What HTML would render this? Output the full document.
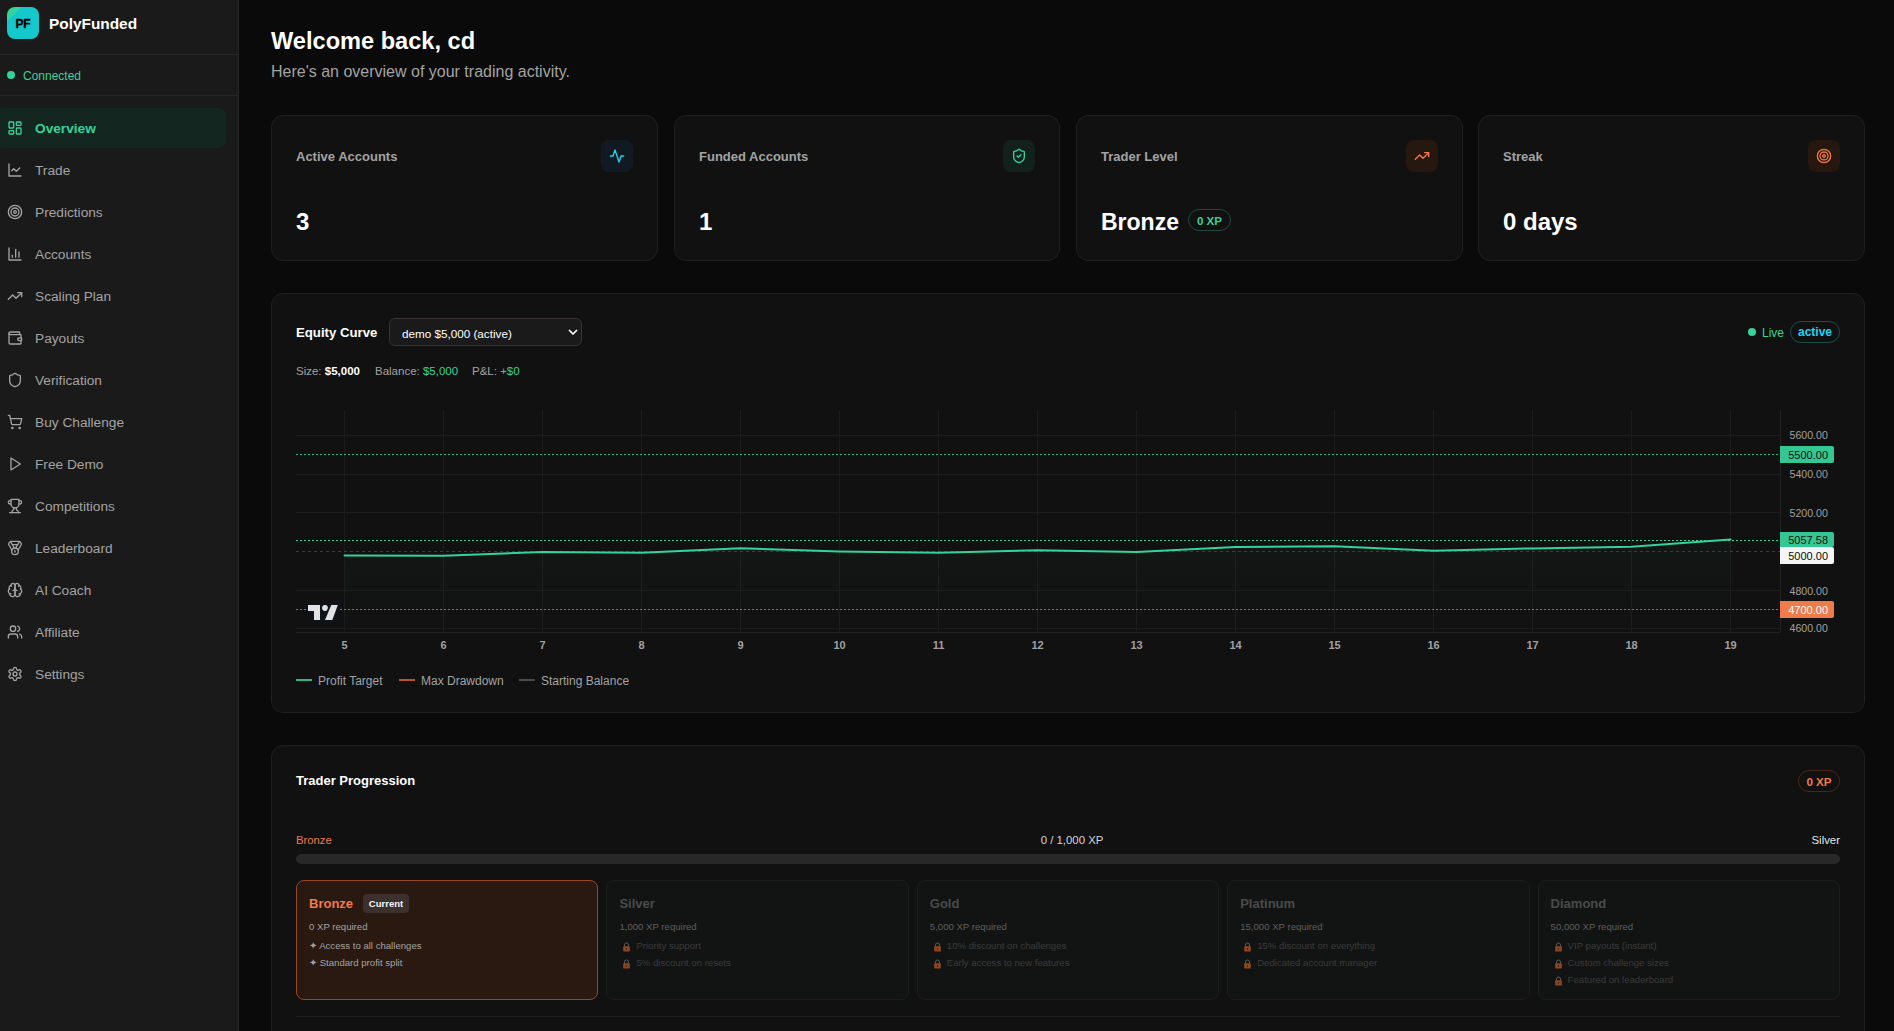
<!DOCTYPE html>
<html><head><meta charset="utf-8">
<style>
*{box-sizing:border-box;margin:0;padding:0}
html,body{width:1894px;height:1031px;overflow:hidden;background:#0a0a0a;font-family:"Liberation Sans",sans-serif;color:#fff}
.a{position:absolute}
#sb{left:0;top:0;width:239px;height:1031px;background:#1a1a1a;border-right:1px solid #262626}
.hr{position:absolute;left:0;width:238px;height:1px;background:#262626}
.nav{position:absolute;left:0;width:238px;height:40px}
.nav svg{position:absolute;left:7px;top:12px;width:16px;height:16px;fill:none;stroke:#a3a3a3;stroke-width:2;stroke-linecap:round;stroke-linejoin:round}
.nav span{position:absolute;left:35px;top:1px;line-height:40px;font-size:13.7px;color:#a3a3a3;white-space:nowrap}
.nav.act svg{stroke:#34d399}.nav.act span{color:#34d399;font-weight:bold}
.card{position:absolute;background:#111111;border:1px solid #1f1f1f;border-radius:12px}
.slab{font-size:13px;font-weight:bold;color:#a3a3a3;line-height:18px;white-space:nowrap}
.sbox{width:32px;height:32px;border-radius:8px}
.sbox svg{position:absolute;left:8px;top:8px;width:16px;height:16px;fill:none;stroke-width:2;stroke-linecap:round;stroke-linejoin:round}
.sval{font-size:24px;font-weight:bold;line-height:32px;color:#fff;white-space:nowrap}
.eq{font-size:11.5px;line-height:14px;color:#a3a3a3;white-space:nowrap}
.pl{font-size:10.6px;line-height:14px;color:#a0a0a0;white-space:nowrap}
.pb{left:1780px;width:54px;font-size:11px;text-align:right;padding-right:6px;padding-top:1px;border-radius:0 2px 2px 0;white-space:nowrap}
.tl{top:638px;width:30px;text-align:center;font-size:11px;line-height:14px;font-weight:bold;color:#a0a0a0}
.lg{top:674px;font-size:12px;line-height:15px;color:#a3a3a3;white-space:nowrap}
.tq{font-size:9.6px;line-height:14px;white-space:nowrap}
.lk{position:absolute;left:0;top:0;width:9px;height:10px}
</style></head><body>
<!-- SIDEBAR -->
<div id="sb" class="a">
  <div class="a" style="left:7px;top:7px;width:32px;height:32px;border-radius:8px;background:linear-gradient(135deg,#34d399 0,#34d399 22%,#14c8cc 22%,#14c8cc 100%);"></div>
  <div class="a" style="left:7px;top:8px;width:32px;height:32px;line-height:32px;text-align:center;font-weight:bold;font-size:12px;letter-spacing:-0.2px;-webkit-text-stroke:0.35px #000;color:#000">PF</div>
  <div class="a" style="left:49px;top:14px;font-size:15.4px;font-weight:bold;line-height:20px;color:#fff">PolyFunded</div>
  <div class="hr" style="top:54px"></div>
  <div class="a" style="left:7px;top:71.4px;width:8px;height:8px;border-radius:50%;background:#34d399"></div>
  <div class="a" style="left:23px;top:69px;font-size:12px;line-height:14px;color:#34d399">Connected</div>
  <div class="hr" style="top:95px"></div>
  <div class="a" style="left:-4px;top:108px;width:230px;height:40px;border-radius:8px;background:#142620"></div>
  <div class="nav act" style="top:108px"><svg viewBox="0 0 24 24"><rect x="3" y="3" width="7" height="9" rx="1"/><rect x="14" y="3" width="7" height="5" rx="1"/><rect x="14" y="12" width="7" height="9" rx="1"/><rect x="3" y="16" width="7" height="5" rx="1"/></svg><span>Overview</span></div>
  <div class="nav" style="top:150px"><svg viewBox="0 0 24 24"><path d="M3 3v18h18"/><path d="m19 9-5 5-4-4-3 3"/></svg><span>Trade</span></div>
  <div class="nav" style="top:192px"><svg viewBox="0 0 24 24"><circle cx="12" cy="12" r="10"/><circle cx="12" cy="12" r="6"/><circle cx="12" cy="12" r="2"/></svg><span>Predictions</span></div>
  <div class="nav" style="top:234px"><svg viewBox="0 0 24 24"><path d="M3 3v18h18"/><path d="M18 17V9"/><path d="M13 17V5"/><path d="M8 17v-3"/></svg><span>Accounts</span></div>
  <div class="nav" style="top:276px"><svg viewBox="0 0 24 24"><polyline points="22 7 13.5 15.5 8.5 10.5 2 17"/><polyline points="16 7 22 7 22 13"/></svg><span>Scaling Plan</span></div>
  <div class="nav" style="top:318px"><svg viewBox="0 0 24 24"><path d="M19 7V4a1 1 0 0 0-1-1H5a2 2 0 0 0 0 4h15a1 1 0 0 1 1 1v4h-3a2 2 0 0 0 0 4h3a1 1 0 0 0 1-1v-2a1 1 0 0 0-1-1"/><path d="M3 5v14a2 2 0 0 0 2 2h15a1 1 0 0 0 1-1v-4"/></svg><span>Payouts</span></div>
  <div class="nav" style="top:360px"><svg viewBox="0 0 24 24"><path d="M20 13c0 5-3.5 7.5-7.66 8.95a1 1 0 0 1-.67-.01C7.5 20.5 4 18 4 13V6a1 1 0 0 1 1-1c2 0 4.5-1.2 6.24-2.72a1.17 1.17 0 0 1 1.52 0C14.51 3.81 17 5 19 5a1 1 0 0 1 1 1z"/></svg><span>Verification</span></div>
  <div class="nav" style="top:402px"><svg viewBox="0 0 24 24"><circle cx="8" cy="21" r="1"/><circle cx="19" cy="21" r="1"/><path d="M2.05 2.05h2l2.66 12.42a2 2 0 0 0 2 1.58h9.78a2 2 0 0 0 1.95-1.57l1.65-7.43H5.12"/></svg><span>Buy Challenge</span></div>
  <div class="nav" style="top:444px"><svg viewBox="0 0 24 24"><polygon points="6 3 20 12 6 21 6 3"/></svg><span>Free Demo</span></div>
  <div class="nav" style="top:486px"><svg viewBox="0 0 24 24"><path d="M6 9H4.5a2.5 2.5 0 0 1 0-5H6"/><path d="M18 9h1.5a2.5 2.5 0 0 0 0-5H18"/><path d="M4 22h16"/><path d="M10 14.66V17c0 .55-.47.98-.97 1.21C7.85 18.75 7 20.24 7 22"/><path d="M14 14.66V17c0 .55.47.98.97 1.21C16.15 18.75 17 20.24 17 22"/><path d="M18 2H6v7a6 6 0 0 0 12 0V2Z"/></svg><span>Competitions</span></div>
  <div class="nav" style="top:528px"><svg viewBox="0 0 24 24"><path d="M7.21 15 2.66 7.14a2 2 0 0 1 .13-2.2L4.4 2.8A2 2 0 0 1 6 2h12a2 2 0 0 1 1.6.8l1.6 2.14a2 2 0 0 1 .14 2.2L16.79 15"/><path d="M11 12 5.12 2.2"/><path d="m13 12 5.88-9.8"/><path d="M8 7h8"/><circle cx="12" cy="17" r="5"/><path d="M12 18v-2h-.5"/></svg><span>Leaderboard</span></div>
  <div class="nav" style="top:570px"><svg viewBox="0 0 24 24"><path d="M12 5a3 3 0 1 0-5.997.125 4 4 0 0 0-2.526 5.77 4 4 0 0 0 .556 6.588A4 4 0 1 0 12 18Z"/><path d="M12 5a3 3 0 1 1 5.997.125 4 4 0 0 1 2.526 5.77 4 4 0 0 1-.556 6.588A4 4 0 1 1 12 18Z"/><path d="M15 13a4.5 4.5 0 0 1-3-4 4.5 4.5 0 0 1-3 4"/><path d="M17.599 6.5a3 3 0 0 0 .399-1.375"/><path d="M6.003 5.125A3 3 0 0 0 6.401 6.5"/><path d="M3.477 10.896a4 4 0 0 1 .585-.396"/><path d="M19.938 10.5a4 4 0 0 1 .585.396"/><path d="M6 18a4 4 0 0 1-1.967-.516"/><path d="M19.967 17.484A4 4 0 0 1 18 18"/></svg><span>AI Coach</span></div>
  <div class="nav" style="top:612px"><svg viewBox="0 0 24 24"><path d="M16 21v-2a4 4 0 0 0-4-4H6a4 4 0 0 0-4 4v2"/><circle cx="9" cy="7" r="4"/><path d="M22 21v-2a4 4 0 0 0-3-3.87"/><path d="M16 3.13a4 4 0 0 1 0 7.75"/></svg><span>Affiliate</span></div>
  <div class="nav" style="top:654px"><svg viewBox="0 0 24 24"><path d="M12.22 2h-.44a2 2 0 0 0-2 2v.18a2 2 0 0 1-1 1.73l-.43.25a2 2 0 0 1-2 0l-.15-.08a2 2 0 0 0-2.73.73l-.22.38a2 2 0 0 0 .73 2.73l.15.1a2 2 0 0 1 1 1.72v.51a2 2 0 0 1-1 1.74l-.15.09a2 2 0 0 0-.73 2.73l.22.38a2 2 0 0 0 2.73.73l.15-.08a2 2 0 0 1 2 0l.43.25a2 2 0 0 1 1 1.73V20a2 2 0 0 0 2 2h.44a2 2 0 0 0 2-2v-.18a2 2 0 0 1 1-1.73l.43-.25a2 2 0 0 1 2 0l.15.08a2 2 0 0 0 2.73-.73l.22-.39a2 2 0 0 0-.73-2.73l-.15-.08a2 2 0 0 1-1-1.74v-.5a2 2 0 0 1 1-1.74l.15-.09a2 2 0 0 0 .73-2.73l-.22-.38a2 2 0 0 0-2.73-.73l-.15.08a2 2 0 0 1-2 0l-.43-.25a2 2 0 0 1-1-1.73V4a2 2 0 0 0-2-2z"/><circle cx="12" cy="12" r="3"/></svg><span>Settings</span></div>
</div>
<!-- MAIN -->
<div class="a" style="left:271px;top:27px;font-size:23.6px;font-weight:bold;line-height:28px;white-space:nowrap">Welcome back, cd</div>
<div class="a" style="left:271px;top:63px;font-size:16px;line-height:18px;color:#a3a3a3;white-space:nowrap">Here's an overview of your trading activity.</div>

<div class="card" style="left:271px;top:115px;width:387px;height:146px"></div>
<div class="card" style="left:674px;top:115px;width:386px;height:146px"></div>
<div class="card" style="left:1076px;top:115px;width:387px;height:146px"></div>
<div class="card" style="left:1478px;top:115px;width:387px;height:146px"></div>

<div class="a slab" style="left:296px;top:148px">Active Accounts</div>
<div class="a sbox" style="left:601px;top:140px;background:#111a22"><svg viewBox="0 0 24 24" style="stroke:#22d3ee"><path d="M22 12h-4l-3 9L9 3l-3 9H2"/></svg></div>
<div class="a sval" style="left:296px;top:206px">3</div>
<div class="a slab" style="left:699px;top:148px">Funded Accounts</div>
<div class="a sbox" style="left:1003px;top:140px;background:#12211b"><svg viewBox="0 0 24 24" style="stroke:#34d399"><path d="M20 13c0 5-3.5 7.5-7.66 8.95a1 1 0 0 1-.67-.01C7.5 20.5 4 18 4 13V6a1 1 0 0 1 1-1c2 0 4.5-1.2 6.24-2.72a1.17 1.17 0 0 1 1.52 0C14.51 3.81 17 5 19 5a1 1 0 0 1 1 1z"/><path d="m9 12 2 2 4-4"/></svg></div>
<div class="a sval" style="left:699px;top:206px">1</div>
<div class="a slab" style="left:1101px;top:148px">Trader Level</div>
<div class="a sbox" style="left:1406px;top:140px;background:#26170f"><svg viewBox="0 0 24 24" style="stroke:#f47a4a"><polyline points="22 7 13.5 15.5 8.5 10.5 2 17"/><polyline points="16 7 22 7 22 13"/></svg></div>
<div class="a sval" style="left:1101px;top:206px;font-size:23px">Bronze</div>
<div class="a slab" style="left:1503px;top:148px">Streak</div>
<div class="a sbox" style="left:1808px;top:140px;background:#26170f"><svg viewBox="0 0 24 24" style="stroke:#f47a4a"><circle cx="12" cy="12" r="10"/><circle cx="12" cy="12" r="6"/><circle cx="12" cy="12" r="2"/></svg></div>
<div class="a sval" style="left:1503px;top:206px">0 days</div>
<div class="a" style="left:1188px;top:209px;width:43px;height:22px;border:1px solid #1d4a3a;border-radius:11px;font-size:11.6px;line-height:21px;text-align:center;color:#34d399;font-weight:bold">0 XP</div>

<div class="card" style="left:271px;top:293px;width:1594px;height:420px"></div>
<div class="a" style="left:296px;top:323.5px;font-size:13.2px;font-weight:bold;line-height:18px;white-space:nowrap">Equity Curve</div>
<div class="a" style="left:389px;top:318px;width:193px;height:28px;border:1px solid #3a3331;border-radius:6px;background:#1a1a1a"></div>
<div class="a" style="left:402px;top:325.5px;font-size:11.7px;line-height:15px;color:#fff;white-space:nowrap">demo $5,000 (active)</div>
<svg class="a" style="left:567px;top:326px" width="12" height="12" viewBox="0 0 24 24" fill="none" stroke="#fff" stroke-width="3.5" stroke-linecap="round" stroke-linejoin="round"><path d="m5 9 7 7 7-7"/></svg>
<div class="a eq" style="left:296px;top:364px">Size: <b style="color:#fff">$5,000</b></div>
<div class="a eq" style="left:375px;top:364px">Balance: <span style="color:#34d399">$5,000</span></div>
<div class="a eq" style="left:472px;top:364px">P&amp;L: <span style="color:#34d399">+$0</span></div>
<div class="a" style="left:1748px;top:328px;width:8px;height:8px;border-radius:50%;background:#34d399"></div>
<div class="a" style="left:1762px;top:326px;font-size:12px;line-height:15px;color:#34d399">Live</div>
<div class="a" style="left:1790px;top:321px;width:50px;height:22px;border:1px solid #1b4d4a;border-radius:11px;font-size:12px;line-height:21px;text-align:center;color:#22d3ee;font-weight:bold">active</div>
<svg class="a" style="left:0;top:0" width="1894" height="1031" viewBox="0 0 1894 1031">
<defs><linearGradient id="ag" x1="0" y1="0" x2="0" y2="1"><stop offset="0" stop-color="#34d399" stop-opacity="0.03"/><stop offset="1" stop-color="#34d399" stop-opacity="0.0"/></linearGradient></defs>
<g stroke="#1c1c1c" stroke-width="1"><line x1="344.5" y1="410" x2="344.5" y2="632"/><line x1="443.5" y1="410" x2="443.5" y2="632"/><line x1="542.5" y1="410" x2="542.5" y2="632"/><line x1="641.5" y1="410" x2="641.5" y2="632"/><line x1="740.5" y1="410" x2="740.5" y2="632"/><line x1="839.5" y1="410" x2="839.5" y2="632"/><line x1="938.5" y1="410" x2="938.5" y2="632"/><line x1="1037.5" y1="410" x2="1037.5" y2="632"/><line x1="1136.5" y1="410" x2="1136.5" y2="632"/><line x1="1235.5" y1="410" x2="1235.5" y2="632"/><line x1="1334.5" y1="410" x2="1334.5" y2="632"/><line x1="1433.5" y1="410" x2="1433.5" y2="632"/><line x1="1532.5" y1="410" x2="1532.5" y2="632"/><line x1="1631.5" y1="410" x2="1631.5" y2="632"/><line x1="1730.5" y1="410" x2="1730.5" y2="632"/><line x1="296" y1="435.5" x2="1780" y2="435.5"/><line x1="296" y1="474.5" x2="1780" y2="474.5"/><line x1="296" y1="512.5" x2="1780" y2="512.5"/><line x1="296" y1="590.5" x2="1780" y2="590.5"/><line x1="296" y1="628.5" x2="1780" y2="628.5"/></g>
<line x1="296" y1="632.5" x2="1780" y2="632.5" stroke="#222" stroke-width="1"/>
<line x1="1780.5" y1="410" x2="1780.5" y2="632" stroke="#222" stroke-width="1"/>
<path d="M344.5 555.4 L443.5 555.8 L542.5 551.9 L641.5 552.7 L740.5 548.3 L839.5 551.5 L938.5 552.7 L1037.5 550.3 L1136.5 551.9 L1235.5 546.9 L1334.5 546.2 L1433.5 550.8 L1532.5 548.4 L1631.5 546.7 L1730.5 539.6 L1730.5 632 L344.5 632 Z" fill="url(#ag)"/>
<line x1="296" y1="454.5" x2="1780" y2="454.5" stroke="#2fb88a" stroke-width="1" stroke-dasharray="2 2"/>
<line x1="296" y1="540.5" x2="1780" y2="540.5" stroke="#34d399" stroke-width="1" stroke-dasharray="2 2"/>
<line x1="296" y1="551.5" x2="1780" y2="551.5" stroke="#3e3b39" stroke-width="1" stroke-dasharray="3 3"/>
<line x1="296" y1="609.5" x2="1780" y2="609.5" stroke="#c8602f" stroke-width="1" stroke-dasharray="2 2"/>
<path d="M344.5 555.4 L443.5 555.8 L542.5 551.9 L641.5 552.7 L740.5 548.3 L839.5 551.5 L938.5 552.7 L1037.5 550.3 L1136.5 551.9 L1235.5 546.9 L1334.5 546.2 L1433.5 550.8 L1532.5 548.4 L1631.5 546.7 L1730.5 539.6" fill="none" stroke="#34d399" stroke-width="2" stroke-linejoin="round" stroke-linecap="round"/>
</svg>
<div class="a pl" style="left:1789.5px;top:427.9px">5600.00</div>
<div class="a pl" style="left:1789.5px;top:466.8px">5400.00</div>
<div class="a pl" style="left:1789.5px;top:505.7px">5200.00</div>
<div class="a pl" style="left:1789.5px;top:583.5px">4800.00</div>
<div class="a pl" style="left:1789.5px;top:621.0px">4600.00</div>
<div class="a pb" style="top:446px;height:17px;line-height:17px;background:#34c794;color:#0d0d0d">5500.00</div>
<div class="a pb" style="top:532px;height:15px;line-height:15px;background:#34c794;color:#0d0d0d">5057.58</div>
<div class="a pb" style="top:547px;height:17px;line-height:17px;background:#f5f5f5;color:#0d0d0d">5000.00</div>
<div class="a pb" style="top:601px;height:17px;line-height:17px;background:#f07b4a;color:#fff">4700.00</div>
<div class="a tl" style="left:329.5px">5</div>
<div class="a tl" style="left:428.5px">6</div>
<div class="a tl" style="left:527.5px">7</div>
<div class="a tl" style="left:626.5px">8</div>
<div class="a tl" style="left:725.5px">9</div>
<div class="a tl" style="left:824.5px">10</div>
<div class="a tl" style="left:923.5px">11</div>
<div class="a tl" style="left:1022.5px">12</div>
<div class="a tl" style="left:1121.5px">13</div>
<div class="a tl" style="left:1220.5px">14</div>
<div class="a tl" style="left:1319.5px">15</div>
<div class="a tl" style="left:1418.5px">16</div>
<div class="a tl" style="left:1517.5px">17</div>
<div class="a tl" style="left:1616.5px">18</div>
<div class="a tl" style="left:1715.5px">19</div>
<svg class="a" style="left:300px;top:595px" width="50" height="30" viewBox="0 0 50 30"><g fill="#e2e2e2" stroke="#0c1522" stroke-width="3.6" stroke-linejoin="miter" style="paint-order:stroke"><path d="M8 10H20V25H14V16H8Z"/><circle cx="25" cy="13" r="2.9"/><path d="M31.3 10H37.8L32.3 25H25Z"/></g></svg>
<div class="a" style="left:296px;top:679px;width:16px;height:2px;background:#2fb58a"></div><div class="a lg" style="left:318px">Profit Target</div>
<div class="a" style="left:399px;top:679px;width:16px;height:2px;background:#b8552a"></div><div class="a lg" style="left:421px">Max Drawdown</div>
<div class="a" style="left:519px;top:679px;width:16px;height:2px;background:#4a4a4a"></div><div class="a lg" style="left:541px">Starting Balance</div>

<div class="card" style="left:271px;top:745px;width:1594px;height:320px"></div>
<div class="a" style="left:296px;top:772px;font-size:13px;font-weight:bold;line-height:17px;white-space:nowrap">Trader Progression</div>
<div class="a" style="left:1798px;top:770px;width:42px;height:22px;border:1px solid #4a2616;border-radius:11px;font-size:11.6px;line-height:21px;text-align:center;color:#f07a4a;font-weight:bold">0 XP</div>
<div class="a" style="left:296px;top:833px;font-size:11.3px;line-height:15px;color:#f07a4a;white-space:nowrap">Bronze</div>
<div class="a" style="left:1000px;top:833px;width:144px;text-align:center;font-size:11.4px;line-height:15px;color:#d4d4d4;white-space:nowrap">0 / 1,000 XP</div>
<div class="a" style="left:1700px;top:833px;width:140px;text-align:right;font-size:11.4px;line-height:15px;color:#e5e5e5;white-space:nowrap">Silver</div>
<div class="a" style="left:296px;top:854px;width:1544px;height:10px;border-radius:5px;background:#282828"></div>
<div class="a" style="left:296.0px;top:880px;width:302.4px;height:120px;border:1px solid #984822;border-radius:8px;background:#2a1910"></div>
<div class="a" style="left:309.0px;top:894.5px;font-size:13px;font-weight:bold;line-height:18px;color:#f07a4a">Bronze</div>
<div class="a" style="left:363.0px;top:894px;width:46px;height:19px;border-radius:4px;background:#3b302d;font-size:9.5px;font-weight:bold;line-height:19px;text-align:center;color:#f5f5f5">Current</div>
<div class="a tq" style="left:309.0px;top:920px;color:#a3a3a3">0 XP required</div>
<div class="a tq" style="left:309.0px;top:939px;color:#a3a3a3">&#10022; Access to all challenges</div>
<div class="a tq" style="left:309.0px;top:956px;color:#a3a3a3">&#10022; Standard profit split</div>
<div class="a" style="left:606.4px;top:880px;width:302.4px;height:120px;border:1px solid #1c1e1e;border-radius:8px;background:#121414"></div>
<div class="a" style="left:619.4px;top:894.5px;font-size:13px;font-weight:bold;line-height:18px;color:#4b4b4b">Silver</div>
<div class="a tq" style="left:619.4px;top:920px;color:#5e5e5e">1,000 XP required</div>
<div class="a" style="left:622.4px;top:941.5px;width:9px;height:10px"><svg class="lk" viewBox="0 0 10 12"><path d="M2.6 5.5V3.6a2.4 2.4 0 0 1 4.8 0v1.9" fill="none" stroke="#5a5a5a" stroke-width="1.2"/><rect x="1" y="5" width="8" height="6.5" rx="1" fill="#8f4521"/><rect x="4.5" y="7.2" width="1" height="2.4" fill="#3a2015"/></svg></div>
<div class="a tq" style="left:636.4px;top:939px;color:#3b3b3b">Priority support</div>
<div class="a" style="left:622.4px;top:958.5px;width:9px;height:10px"><svg class="lk" viewBox="0 0 10 12"><path d="M2.6 5.5V3.6a2.4 2.4 0 0 1 4.8 0v1.9" fill="none" stroke="#5a5a5a" stroke-width="1.2"/><rect x="1" y="5" width="8" height="6.5" rx="1" fill="#8f4521"/><rect x="4.5" y="7.2" width="1" height="2.4" fill="#3a2015"/></svg></div>
<div class="a tq" style="left:636.4px;top:956px;color:#3b3b3b">5% discount on resets</div>
<div class="a" style="left:916.8px;top:880px;width:302.4px;height:120px;border:1px solid #1c1e1e;border-radius:8px;background:#121414"></div>
<div class="a" style="left:929.8px;top:894.5px;font-size:13px;font-weight:bold;line-height:18px;color:#4b4b4b">Gold</div>
<div class="a tq" style="left:929.8px;top:920px;color:#5e5e5e">5,000 XP required</div>
<div class="a" style="left:932.8px;top:941.5px;width:9px;height:10px"><svg class="lk" viewBox="0 0 10 12"><path d="M2.6 5.5V3.6a2.4 2.4 0 0 1 4.8 0v1.9" fill="none" stroke="#5a5a5a" stroke-width="1.2"/><rect x="1" y="5" width="8" height="6.5" rx="1" fill="#8f4521"/><rect x="4.5" y="7.2" width="1" height="2.4" fill="#3a2015"/></svg></div>
<div class="a tq" style="left:946.8px;top:939px;color:#3b3b3b">10% discount on challenges</div>
<div class="a" style="left:932.8px;top:958.5px;width:9px;height:10px"><svg class="lk" viewBox="0 0 10 12"><path d="M2.6 5.5V3.6a2.4 2.4 0 0 1 4.8 0v1.9" fill="none" stroke="#5a5a5a" stroke-width="1.2"/><rect x="1" y="5" width="8" height="6.5" rx="1" fill="#8f4521"/><rect x="4.5" y="7.2" width="1" height="2.4" fill="#3a2015"/></svg></div>
<div class="a tq" style="left:946.8px;top:956px;color:#3b3b3b">Early access to new features</div>
<div class="a" style="left:1227.2px;top:880px;width:302.4px;height:120px;border:1px solid #1c1e1e;border-radius:8px;background:#121414"></div>
<div class="a" style="left:1240.2px;top:894.5px;font-size:13px;font-weight:bold;line-height:18px;color:#4b4b4b">Platinum</div>
<div class="a tq" style="left:1240.2px;top:920px;color:#5e5e5e">15,000 XP required</div>
<div class="a" style="left:1243.2px;top:941.5px;width:9px;height:10px"><svg class="lk" viewBox="0 0 10 12"><path d="M2.6 5.5V3.6a2.4 2.4 0 0 1 4.8 0v1.9" fill="none" stroke="#5a5a5a" stroke-width="1.2"/><rect x="1" y="5" width="8" height="6.5" rx="1" fill="#8f4521"/><rect x="4.5" y="7.2" width="1" height="2.4" fill="#3a2015"/></svg></div>
<div class="a tq" style="left:1257.2px;top:939px;color:#3b3b3b">15% discount on everything</div>
<div class="a" style="left:1243.2px;top:958.5px;width:9px;height:10px"><svg class="lk" viewBox="0 0 10 12"><path d="M2.6 5.5V3.6a2.4 2.4 0 0 1 4.8 0v1.9" fill="none" stroke="#5a5a5a" stroke-width="1.2"/><rect x="1" y="5" width="8" height="6.5" rx="1" fill="#8f4521"/><rect x="4.5" y="7.2" width="1" height="2.4" fill="#3a2015"/></svg></div>
<div class="a tq" style="left:1257.2px;top:956px;color:#3b3b3b">Dedicated account manager</div>
<div class="a" style="left:1537.6px;top:880px;width:302.4px;height:120px;border:1px solid #1c1e1e;border-radius:8px;background:#121414"></div>
<div class="a" style="left:1550.6px;top:894.5px;font-size:13px;font-weight:bold;line-height:18px;color:#4b4b4b">Diamond</div>
<div class="a tq" style="left:1550.6px;top:920px;color:#5e5e5e">50,000 XP required</div>
<div class="a" style="left:1553.6px;top:941.5px;width:9px;height:10px"><svg class="lk" viewBox="0 0 10 12"><path d="M2.6 5.5V3.6a2.4 2.4 0 0 1 4.8 0v1.9" fill="none" stroke="#5a5a5a" stroke-width="1.2"/><rect x="1" y="5" width="8" height="6.5" rx="1" fill="#8f4521"/><rect x="4.5" y="7.2" width="1" height="2.4" fill="#3a2015"/></svg></div>
<div class="a tq" style="left:1567.6px;top:939px;color:#3b3b3b">VIP payouts (instant)</div>
<div class="a" style="left:1553.6px;top:958.5px;width:9px;height:10px"><svg class="lk" viewBox="0 0 10 12"><path d="M2.6 5.5V3.6a2.4 2.4 0 0 1 4.8 0v1.9" fill="none" stroke="#5a5a5a" stroke-width="1.2"/><rect x="1" y="5" width="8" height="6.5" rx="1" fill="#8f4521"/><rect x="4.5" y="7.2" width="1" height="2.4" fill="#3a2015"/></svg></div>
<div class="a tq" style="left:1567.6px;top:956px;color:#3b3b3b">Custom challenge sizes</div>
<div class="a" style="left:1553.6px;top:975.5px;width:9px;height:10px"><svg class="lk" viewBox="0 0 10 12"><path d="M2.6 5.5V3.6a2.4 2.4 0 0 1 4.8 0v1.9" fill="none" stroke="#5a5a5a" stroke-width="1.2"/><rect x="1" y="5" width="8" height="6.5" rx="1" fill="#8f4521"/><rect x="4.5" y="7.2" width="1" height="2.4" fill="#3a2015"/></svg></div>
<div class="a tq" style="left:1567.6px;top:973px;color:#3b3b3b">Featured on leaderboard</div>
<div class="a" style="left:296px;top:1016px;width:1544px;height:1px;background:#1f1f1f"></div>
</body></html>
